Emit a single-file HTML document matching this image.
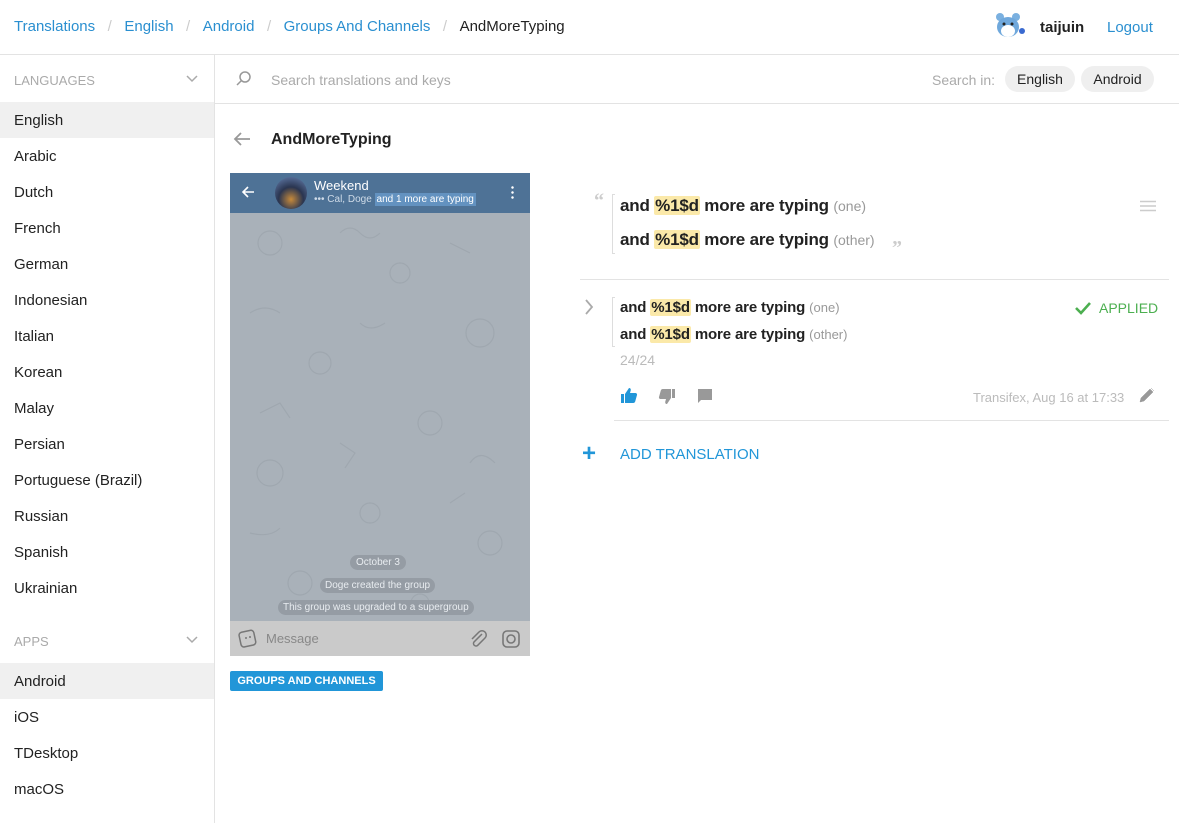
<!DOCTYPE html>
<html><head><meta charset="utf-8">
<style>
*{margin:0;padding:0;box-sizing:border-box}
body{width:1179px;height:823px;background:#fff;font-family:"Liberation Sans",sans-serif;color:#222;position:relative;overflow:hidden}
.a{position:absolute;white-space:nowrap}
.blue{color:#2a8fd0}
.sep{color:#ccc}
.side div.it{position:absolute;left:0;width:214px;height:36px;line-height:38px;padding-left:14px;font-size:15px;color:#222}
.hl{background:#f0f0f0}
.ph{background:#fbe9a9;border-radius:2px;padding:0 1px}
.mut{color:#999;font-weight:normal}
</style></head><body>
<div class="a" style="left:14px;top:18px;font-size:15px;">
<span class="blue">Translations</span><span class="sep">&nbsp;&nbsp; / &nbsp;&nbsp;</span><span class="blue">English</span><span class="sep">&nbsp;&nbsp; / &nbsp;&nbsp;</span><span class="blue">Android</span><span class="sep">&nbsp;&nbsp; / &nbsp;&nbsp;</span><span class="blue">Groups And Channels</span><span class="sep">&nbsp;&nbsp; / &nbsp;&nbsp;</span><span style="color:#222">AndMoreTyping</span></div>
<svg class="a" style="left:994px;top:12px" width="32" height="30" viewBox="0 0 32 30"><circle cx="6" cy="5" r="4" fill="#7ab0e0"/><circle cx="22" cy="5" r="4" fill="#7ab0e0"/><ellipse cx="14" cy="15" rx="11" ry="10" fill="#6fa8dc"/><ellipse cx="14" cy="19" rx="7" ry="6" fill="#fff"/><circle cx="10" cy="12" r="1.5" fill="#222"/><circle cx="18" cy="12" r="1.5" fill="#222"/><circle cx="28" cy="19" r="3" fill="#3a6ad0"/></svg>
<div class="a" style="left:1040px;top:19px;font-size:15px;font-weight:bold">taijuin</div>
<div class="a blue" style="left:1107px;top:19px;font-size:15px">Logout</div>
<div class="a" style="left:0;top:54px;width:1179px;height:1px;background:#e3e3e3"></div>
<div class="a" style="left:214px;top:55px;width:1px;height:768px;background:#e3e3e3"></div>
<div class="side">
<div class="a" style="left:14px;top:73px;font-size:13px;color:#aaa">LANGUAGES</div>
<svg class="a" style="left:186px;top:75px" width="12" height="8"><path d="M1 1l5 5 5-5" stroke="#aaa" stroke-width="1.5" fill="none"/></svg>
<div class="it hl" style="top:102px">English</div>
<div class="it" style="top:138px">Arabic</div>
<div class="it" style="top:174px">Dutch</div>
<div class="it" style="top:210px">French</div>
<div class="it" style="top:246px">German</div>
<div class="it" style="top:282px">Indonesian</div>
<div class="it" style="top:318px">Italian</div>
<div class="it" style="top:354px">Korean</div>
<div class="it" style="top:390px">Malay</div>
<div class="it" style="top:426px">Persian</div>
<div class="it" style="top:462px">Portuguese (Brazil)</div>
<div class="it" style="top:498px">Russian</div>
<div class="it" style="top:534px">Spanish</div>
<div class="it" style="top:570px">Ukrainian</div>
<div class="a" style="left:14px;top:634px;font-size:13px;color:#aaa">APPS</div>
<svg class="a" style="left:186px;top:636px" width="12" height="8"><path d="M1 1l5 5 5-5" stroke="#aaa" stroke-width="1.5" fill="none"/></svg>
<div class="it hl" style="top:663px">Android</div>
<div class="it" style="top:699px">iOS</div>
<div class="it" style="top:735px">TDesktop</div>
<div class="it" style="top:771px">macOS</div>
</div>
<svg class="a" style="left:235px;top:70px" width="18" height="18"><circle cx="10" cy="7" r="5" stroke="#999" stroke-width="1.5" fill="none"/><path d="M6.5 10.5L2 15" stroke="#999" stroke-width="1.5"/></svg>
<div class="a" style="left:271px;top:72px;font-size:14px;color:#aaa">Search translations and keys</div>
<div class="a" style="left:932px;top:72px;font-size:14px;color:#aaa">Search in:</div>
<div class="a" style="left:1005px;top:66px;width:70px;height:26px;border-radius:13px;background:#efefef;font-size:14px;line-height:27px;text-align:center">English</div>
<div class="a" style="left:1081px;top:66px;width:73px;height:26px;border-radius:13px;background:#efefef;font-size:14px;line-height:27px;text-align:center">Android</div>
<div class="a" style="left:215px;top:103px;width:964px;height:1px;background:#e3e3e3"></div>
<svg class="a" style="left:233px;top:131px" width="18" height="16"><path d="M17 8H2M8 2L2 8l6 6" stroke="#999" stroke-width="1.8" fill="none"/></svg>
<div class="a" style="left:271px;top:131px;font-size:16px;font-weight:bold">AndMoreTyping</div>
<div class="a" style="left:230px;top:173px;width:300px;height:483px;background:#a9b1b9;overflow:hidden">
 <svg class="a" style="left:0;top:40px" width="300" height="410" opacity="0.35">
  <g stroke="#8e979f" stroke-width="1.2" fill="none">
   <circle cx="40" cy="30" r="12"/><circle cx="170" cy="60" r="10"/><circle cx="250" cy="120" r="14"/><circle cx="90" cy="150" r="11"/><circle cx="200" cy="210" r="12"/><circle cx="40" cy="260" r="13"/><circle cx="140" cy="300" r="10"/><circle cx="260" cy="330" r="12"/><circle cx="70" cy="370" r="12"/><circle cx="190" cy="390" r="9"/>
   <path d="M110 20q10-10 20 0t20 0M20 100q15-10 30 0M220 30l20 10M130 110q10 10 25 0M30 200l20-10 10 15M240 250q10-15 25 0M110 230l15 10-10 15M20 320q20 5 30-5M220 290l15-10M130 350l20 0"/>
  </g>
 </svg>
 <div class="a" style="left:0;top:0;width:300px;height:40px;background:#4e7296"></div>
 <svg class="a" style="left:11px;top:12px" width="14" height="14"><path d="M13 7H2M7 2L2 7l5 5" stroke="#fff" stroke-width="1.6" fill="none"/></svg>
 <div class="a" style="left:45px;top:4px;width:32px;height:32px;border-radius:50%;background:radial-gradient(circle at 50% 70%,#c88a3a 0,#2a3550 45%,#6a86b8 100%)"></div>
 <div class="a" style="left:84px;top:5px;color:#fff;font-size:13px">Weekend</div>
 <div class="a" style="left:84px;top:21px;color:#cfdbe8;font-size:10px">••• Cal, Doge <span style="background:#6392c0;color:#fff;padding:1px 2px">and 1 more are typing</span></div>
 <div class="a" style="left:281px;top:12px;width:3px;height:14px;background:radial-gradient(circle,#fff 1px,transparent 1.5px) 0 0/3px 5px"></div>
 <div class="a" style="left:120px;top:382px;height:15px;padding:0 6px;border-radius:8px;background:#959ca4;color:#e8ecf0;font-size:10px;line-height:15px">October 3</div>
 <div class="a" style="left:90px;top:405px;height:15px;padding:0 5px;border-radius:8px;background:#959ca4;color:#e8ecf0;font-size:10px;line-height:15px">Doge created the group</div>
 <div class="a" style="left:48px;top:427px;height:15px;padding:0 5px;border-radius:8px;background:#959ca4;color:#e8ecf0;font-size:10px;line-height:15px">This group was upgraded to a supergroup</div>
 <div class="a" style="left:0;top:448px;width:300px;height:35px;background:#cacaca"></div>
 <svg class="a" style="left:8px;top:456px" width="20" height="20"><rect x="2" y="2" width="15" height="15" rx="3" transform="rotate(-12 10 10)" stroke="#777" stroke-width="1.5" fill="none"/><circle cx="8" cy="9" r="1" fill="#777"/><circle cx="12" cy="8" r="1" fill="#777"/></svg>
 <div class="a" style="left:36px;top:458px;font-size:13px;color:#888">Message</div>
 <svg class="a" style="left:238px;top:456px" width="20" height="20"><path d="M14 5L6 13a2.5 2.5 0 0 0 3.5 3.5L17 9a4 4 0 0 0-6-6L4 10" stroke="#777" stroke-width="1.5" fill="none"/></svg>
 <svg class="a" style="left:271px;top:456px" width="20" height="20"><rect x="2" y="2" width="16" height="16" rx="4" stroke="#777" stroke-width="1.6" fill="none"/><circle cx="10" cy="10" r="4" stroke="#777" stroke-width="1.6" fill="none"/></svg>
</div>
<div class="a" style="left:230px;top:671px;width:153px;height:20px;background:#2196d8;color:#fff;font-size:11px;font-weight:bold;line-height:20px;text-align:center;border-radius:2px">GROUPS AND CHANNELS</div>
<div class="a" style="left:594px;top:190px;font-size:20px;color:#ccc;font-family:'Liberation Serif',serif;font-weight:bold">“</div>
<div class="a" style="left:612px;top:194px;width:3px;height:60px;border:1px solid #ddd;border-right:none"></div>
<div class="a" style="left:620px;top:196px;font-size:17px;font-weight:bold;letter-spacing:-0.2px">and <span class="ph">%1$d</span> more are typing <span class="mut" style="font-size:14px;letter-spacing:0">(one)</span></div>
<div class="a" style="left:620px;top:230px;font-size:17px;font-weight:bold;letter-spacing:-0.2px">and <span class="ph">%1$d</span> more are typing <span class="mut" style="font-size:14px;letter-spacing:0">(other)</span></div>
<div class="a" style="left:892px;top:237px;font-size:20px;color:#ccc;font-family:'Liberation Serif',serif;font-weight:bold">”</div>
<svg class="a" style="left:1140px;top:200px" width="16" height="12"><path d="M0 1.5h16M0 6h16M0 10.5h16" stroke="#ccc" stroke-width="1.4"/></svg>
<div class="a" style="left:580px;top:279px;width:589px;height:1px;background:#e3e3e3"></div>
<svg class="a" style="left:584px;top:299px" width="10" height="16"><path d="M2 1l6 7-6 7" stroke="#aaa" stroke-width="1.8" fill="none"/></svg>
<div class="a" style="left:612px;top:297px;width:3px;height:50px;border:1px solid #ddd;border-right:none"></div>
<div class="a" style="left:620px;top:299px;font-size:15px;font-weight:bold;letter-spacing:-0.15px">and <span class="ph">%1$d</span> more are typing <span class="mut" style="font-size:13px;letter-spacing:0">(one)</span></div>
<div class="a" style="left:620px;top:326px;font-size:15px;font-weight:bold;letter-spacing:-0.15px">and <span class="ph">%1$d</span> more are typing <span class="mut" style="font-size:13px;letter-spacing:0">(other)</span></div>
<div class="a" style="left:620px;top:352px;font-size:14px;color:#bbb">24/24</div>
<svg class="a" style="left:1074px;top:300px" width="18" height="16"><path d="M2 8l5 5 9-10" stroke="#4caf50" stroke-width="2.6" fill="none"/></svg>
<div class="a" style="left:1099px;top:300px;font-size:14px;color:#4caf50">APPLIED</div>
<svg class="a" style="left:620px;top:386px" width="18" height="18"><path d="M1 8h3v9H1zM5 8l4-6c1.5 0 2 1 1.7 2.5L10 7h5.5c1 0 1.8 1 1.5 2l-1.8 6.5c-.3.9-1 1.5-2 1.5H5z" fill="#2196d8"/></svg>
<svg class="a" style="left:658px;top:388px" width="18" height="18"><g transform="rotate(180 9 9)"><path d="M1 8h3v9H1zM5 8l4-6c1.5 0 2 1 1.7 2.5L10 7h5.5c1 0 1.8 1 1.5 2l-1.8 6.5c-.3.9-1 1.5-2 1.5H5z" fill="#999"/></g></svg>
<svg class="a" style="left:697px;top:388px" width="16" height="16"><path d="M1 1h14v11H4l-3 3z" fill="#999"/></svg>
<div class="a" style="left:973px;top:390px;font-size:13px;color:#bbb">Transifex, Aug 16 at 17:33</div>
<svg class="a" style="left:1139px;top:387px" width="16" height="16"><path d="M1 15l1-4 9-9 3 3-9 9zM12 1l3 3" stroke="#999" stroke-width="0.5" fill="#999"/></svg>
<div class="a" style="left:614px;top:420px;width:555px;height:1px;background:#e3e3e3"></div>
<div class="a" style="left:582px;top:440px;font-size:24px;color:#2196d8;font-weight:bold">+</div>
<div class="a" style="left:620px;top:446px;font-size:15px;color:#2196d8">ADD TRANSLATION</div>
</body></html>
